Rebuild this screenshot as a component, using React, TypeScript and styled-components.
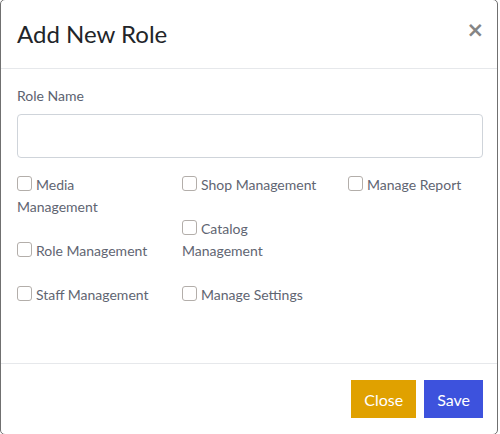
import React, { useState } from 'react';
import styled, { createGlobalStyle } from 'styled-components';

const GlobalStyle = createGlobalStyle`
  html, body {
    margin: 0;
    padding: 0;
    background: #ffffff;
  }
  body {
    font-family: Lato, "Open Sans", "Liberation Sans", sans-serif;
  }
  * {
    box-sizing: border-box;
  }
`;

const Modal = styled.div`
  width: 498px;
  height: 436px;
  margin-top: -1px;
  background: #ffffff;
  border: 1px solid #707070;
  border-radius: 5px;
  display: flex;
  flex-direction: column;
  overflow: hidden;
`;

const Header = styled.div`
  display: flex;
  align-items: flex-start;
  justify-content: space-between;
  padding: 16px 16px;
  border-bottom: 1px solid #e6e8eb;
`;

const Title = styled.h4`
  margin: 0;
  font-size: 24px;
  line-height: 36px;
  font-weight: 400;
  color: #222529;
`;

const CloseX = styled.button`
  border: 0;
  background: transparent;
  padding: 0;
  margin: 3px -3px 0 auto;
  font-family: "DejaVu Sans", sans-serif;
  font-size: 21px;
  font-weight: 700;
  line-height: 22px;
  color: #858585;
  cursor: pointer;
`;

const Body = styled.div`
  padding: 16px 14px 16px 16px;
  flex: 1;
`;

const FieldLabel = styled.label`
  display: block;
  font-size: 14px;
  line-height: 21px;
  color: #5c6270;
  margin-bottom: 8px;
`;

const TextInput = styled.input`
  display: block;
  width: 100%;
  height: 44px;
  border: 1px solid #cfd4da;
  border-radius: 4px;
  padding: 6px 12px;
  font-size: 14px;
  font-family: inherit;
  outline: none;
  margin-bottom: 16px;
`;

const PermGrid = styled.div`
  display: grid;
  grid-template-columns: 165px 166px 1fr;
  margin-bottom: 38px;
`;

const PermColumn = styled.div`
  display: flex;
  flex-direction: column;
  gap: 22px;
`;

const PermItem = styled.label`
  display: block;
  max-width: 140px;
  font-size: 14px;
  line-height: 22px;
  color: #5f6572;
  cursor: pointer;
`;

const Box = styled.span<{ checked: boolean }>`
  display: inline-block;
  width: 15px;
  height: 15px;
  margin-right: 4px;
  vertical-align: -1px;
  border: 1px solid #b3aeaa;
  border-radius: 3px;
  background: ${(p) => (p.checked ? '#3d52dd' : '#ffffff')};
`;

const Footer = styled.div`
  display: flex;
  justify-content: flex-end;
  gap: 8px;
  padding: 16px 14px 16px 16px;
  border-top: 1px solid #e6e8eb;
`;

const Button = styled.button<{ tone: 'warning' | 'primary' }>`
  height: 38px;
  padding: 0 13px;
  border: 0;
  border-radius: 0;
  font-family: inherit;
  font-size: 16px;
  color: #ffffff;
  background: ${(p) => (p.tone === 'warning' ? '#e0a100' : '#3d52dd')};
  cursor: pointer;
`;

const columns = [
  ['Media Management', 'Role Management', 'Staff Management'],
  ['Shop Management', 'Catalog Management', 'Manage Settings'],
  ['Manage Report'],
];

export default function App() {
  const [checked, setChecked] = useState<Record<string, boolean>>({});

  const toggle = (name: string) => setChecked((c) => ({ ...c, [name]: !c[name] }));

  return (
    <>
      <GlobalStyle />
      <Modal>
        <Header>
          <Title>Add New Role</Title>
          <CloseX aria-label="Close">×</CloseX>
        </Header>
        <Body>
          <FieldLabel>Role Name</FieldLabel>
          <TextInput type="text" />
          <PermGrid>
            {columns.map((col, i) => (
              <PermColumn key={i}>
                {col.map((name) => (
                  <PermItem key={name} onClick={() => toggle(name)}>
                    <Box checked={!!checked[name]} />
                    {name}
                  </PermItem>
                ))}
              </PermColumn>
            ))}
          </PermGrid>
        </Body>
        <Footer>
          <Button tone="warning">Close</Button>
          <Button tone="primary">Save</Button>
        </Footer>
      </Modal>
    </>
  );
}
